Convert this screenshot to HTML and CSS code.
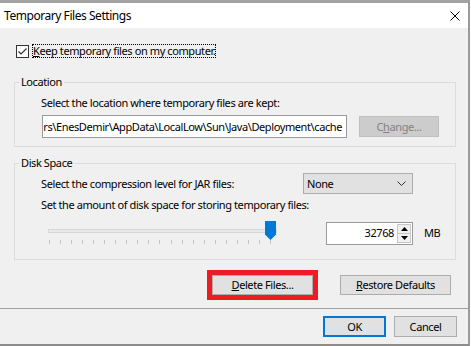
FILE: index.html
```html
<!DOCTYPE html>
<html lang="en">
<head>
<meta charset="utf-8">
<title>Temporary Files Settings</title>
<link rel="stylesheet" href="styles.css">
</head>
<body>
<div class="window">
  <div class="titlebar">
    <span class="title">Temporary Files Settings</span>
    <svg class="close" width="10" height="10" viewBox="0 0 10 10"><path d="M0.5 0.5 L9.5 9.5 M9.5 0.5 L0.5 9.5" stroke="#000" stroke-width="1" fill="none"/></svg>
  </div>
  <div class="content">
    <div class="check-row">
      <span class="checkbox"><svg width="11" height="11" viewBox="0 0 11 11"><path d="M1.5 5.5 L4 8 L9.5 2.5" stroke="#333" stroke-width="1.2" fill="none"/></svg></span>
      <span class="focus"><u>K</u>eep temporary files on my computer.</span>
    </div>

    <fieldset class="group group-location">
      <legend>Location</legend>
      <div class="group-body">
        <div class="line">Select the location where temporary files are kept:</div>
        <div class="path-row">
          <div class="path"><span>rs\EnesDemir\AppData\LocalLow\Sun\Java\Deployment\cache</span></div>
          <button class="btn btn-disabled btn-change" disabled>C<u>h</u>ange...</button>
        </div>
      </div>
    </fieldset>

    <fieldset class="group group-disk">
      <legend>Disk Space</legend>
      <div class="group-body disk-body">
        <div class="combo-row">
          <span class="line">Select the compression level for JAR files:</span>
          <div class="combo"><span>None</span><svg width="9" height="5" viewBox="0 0 9 5"><path d="M0.5 0.5 L4.5 4.5 L8.5 0.5" stroke="#333" fill="none"/></svg></div>
        </div>
        <div class="line line-amount">Set the amount of disk space for storing temporary files:</div>
        <div class="slider-row">
          <div class="slider">
            <div class="track"></div>
            <div class="ticks">
              <i></i><i></i><i></i><i></i><i></i><i></i><i></i><i></i><i></i><i></i><i></i>
              <i></i><i></i><i></i><i></i><i></i><i></i><i></i><i></i><i></i><i></i>
            </div>
            <svg class="thumb" width="11" height="19" viewBox="0 0 11 19"><path d="M0 0 H11 V13.5 L5.5 19 L0 13.5 Z" fill="#0078d7"/></svg>
          </div>
          <div class="spinner">
            <span class="spin-value">32768</span>
            <div class="spin-buttons">
              <span class="spin-btn"><svg width="7" height="4" viewBox="0 0 7 4"><path d="M0 4 L3.5 0 L7 4 Z" fill="#000"/></svg></span>
              <span class="spin-btn"><svg width="7" height="4" viewBox="0 0 7 4"><path d="M0 0 L3.5 4 L7 0 Z" fill="#000"/></svg></span>
            </div>
          </div>
          <span class="unit">MB</span>
        </div>
      </div>
    </fieldset>

    <div class="actions">
      <div class="highlight"><button class="btn btn-delete"><u>D</u>elete Files...</button></div>
      <button class="btn btn-restore"><u>R</u>estore Defaults</button>
    </div>
  </div>
  <div class="separator"></div>
  <div class="footer">
    <button class="btn btn-ok">OK</button>
    <button class="btn btn-cancel">Cancel</button>
  </div>
</div>
</body>
</html>
```

FILE: styles.css
```css
* { box-sizing: border-box; }
html, body { margin: 0; padding: 0; background: #ffffff; }
body {
  font-family: "Noto Sans", "Open Sans", sans-serif;
  font-size: 11px;
  line-height: 14px;
  letter-spacing: -0.4px;
  color: #000;
}
.window {
  width: 470px;
  height: 346px;
  border-top: 3px solid #a3a3a3;
  border-right: 2px solid #9a9a9a;
  border-bottom: 2px solid #8c8c8c;
  background: #f0f0f0;
  overflow: hidden;
}
.titlebar {
  height: 25px;
  background: #fff;
  display: flex;
  align-items: center;
  justify-content: space-between;
  padding: 0 8px 0 4px;
}
.title { font-size: 12px; letter-spacing: -0.45px; }
.close { display: block; }

.content { padding: 16px 0 0 14px; }

.check-row {
  display: flex;
  align-items: center;
  height: 14px;
}
.checkbox {
  width: 13px;
  height: 13px;
  margin-left: 2px;
  border: 1px solid #333;
  background: #fff;
  display: flex;
  align-items: center;
  justify-content: center;
}
.checkbox svg { display: block; }
.focus {
  margin-left: 3px;
  padding: 0 1px;
  outline: 1px dotted #000;
  outline-offset: -1px;
  height: 14px;
}

.group {
  margin: 0;
  padding: 0;
  border: 1px solid #dcdcdc;
  width: 442px;
  min-width: 0;
}
.group legend {
  padding: 0 2px;
  margin-left: 4px;
}
.group-location { margin-top: 17px; }
.group-disk { margin-top: 9px; }
.group-body { padding: 7px 0 8px 26px; }

.path-row {
  display: flex;
  align-items: center;
  margin-top: 5px;
}
.path {
  width: 305px;
  height: 23px;
  margin-left: 1px;
  border: 1px solid #9a9a9a;
  background: #fff;
  display: flex;
  align-items: center;
  justify-content: flex-end;
  overflow: hidden;
  padding-right: 4px;
  white-space: nowrap;
}
.path span { flex: none; }

.btn {
  font-family: inherit;
  font-size: 11px;
  line-height: 14px;
  letter-spacing: -0.4px;
  color: #000;
  background: #e1e1e1;
  border: 1px solid #adadad;
  padding: 0;
  margin: 0;
  height: 20px;
  display: flex;
  align-items: center;
  justify-content: center;
}
.btn-change {
  width: 80px;
  height: 21px;
  margin-left: 12px;
}
.btn-disabled {
  background: #cccccc;
  border-color: #bfbfbf;
  color: #838383;
}

.disk-body { padding: 3px 0 14px 26px; }
.combo-row {
  display: flex;
  align-items: center;
  width: 372px;
  justify-content: space-between;
}
.combo {
  width: 110px;
  height: 21px;
  background: #e1e1e1;
  border: 1px solid #adadad;
  display: flex;
  align-items: center;
  justify-content: space-between;
  padding: 0 6px 0 3px;
}
.combo svg { display: block; }
.line-amount { margin-top: 4px; }

.slider-row {
  display: flex;
  align-items: center;
  margin-top: 9px;
}
.slider {
  position: relative;
  width: 229px;
  height: 24px;
  margin-left: 7px;
}
.track {
  margin-top: 8px;
  height: 4px;
  background: #e7eaea;
  border: 1px solid #d6d6d6;
}
.ticks {
  display: flex;
  justify-content: space-between;
  margin: 7px 6px 0 1px;
  height: 4px;
}
.ticks i {
  display: block;
  width: 1px;
  height: 4px;
  background: #c4c4c4;
}
.thumb {
  position: absolute;
  left: 217px;
  top: 0;
  display: block;
}
.spinner {
  width: 87px;
  height: 23px;
  margin-left: 49px;
  background: #fff;
  border: 1px solid #9a9a9a;
  display: flex;
  align-items: center;
  justify-content: flex-end;
  padding: 1px 1px 1px 0;
}
.spin-value { margin-right: 3px; }
.spin-buttons {
  width: 14px;
  height: 19px;
  display: flex;
  flex-direction: column;
  border: 1px solid #c8c8c8;
  background: #f0f0f0;
}
.spin-btn {
  flex: 1;
  display: flex;
  align-items: center;
  justify-content: center;
}
.spin-btn + .spin-btn { border-top: 1px solid #c8c8c8; }
.spin-btn svg { display: block; }
.unit { margin-left: 11px; }

.actions {
  display: flex;
  align-items: center;
  justify-content: flex-end;
  margin-top: 10px;
  padding-right: 17px;
}
.highlight {
  border: 5px solid #ed1c24;
}
.btn-delete { width: 101px; }
.btn-restore { width: 111px; margin-left: 22px; }

.separator {
  height: 1px;
  background: #a0a0a0;
  margin-top: 8px;
}
.footer {
  display: flex;
  justify-content: flex-end;
  gap: 8px;
  padding: 7px 11px 0 0;
}
.btn-ok, .btn-cancel { width: 63px; height: 21px; }
.btn-ok { border: 2px solid #0078d7; }
```
